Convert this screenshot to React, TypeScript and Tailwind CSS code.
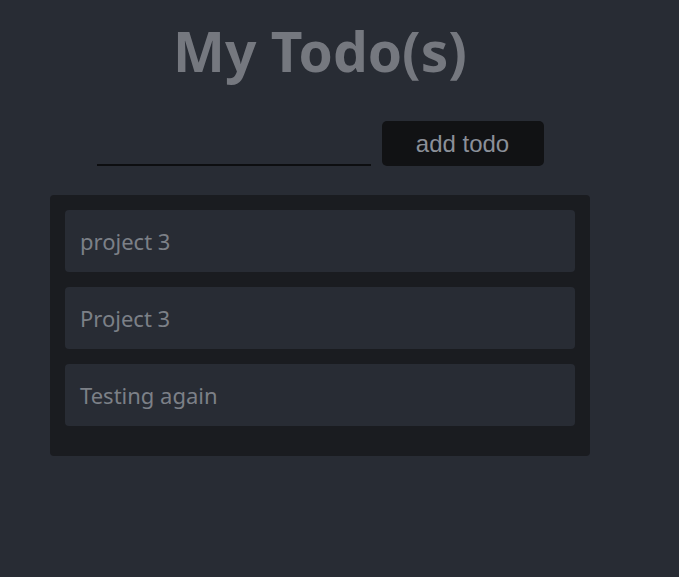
const todos = ["project 3", "Project 3", "Testing again"];

export default function App() {
  return (
    <div className="min-h-[577px] w-full bg-[#282c34] font-['Noto_Sans',sans-serif]">
      <div className="flex w-[640px] flex-col items-center pt-[17px]">
        <h1 className="text-[55px] font-bold leading-[68px] text-[#75787f]">My Todo(s)</h1>

        <div className="mt-[36px] flex items-end gap-[11px]">
          <input
            type="text"
            className="h-[30px] w-[274px] border-b-2 border-[#0d0e10] bg-transparent px-1 text-[#9aa0a8] outline-none"
          />
          <button className="h-[45px] w-[162px] rounded-[5px] bg-[#111214] font-['Liberation_Sans',sans-serif] text-[24px] text-[#8b9099]">
            add todo
          </button>
        </div>

        <div className="mt-[29px] flex w-[540px] flex-col gap-[15px] rounded-[4px] bg-[#1a1c20] px-[15px] pb-[30px] pt-[15px]">
          {todos.map((t, i) => (
            <div
              key={i}
              className="flex h-[62px] items-center rounded-[4px] bg-[#282c34] px-[15px] text-[22px] text-[#7c8087]"
            >
              {t}
            </div>
          ))}
        </div>
      </div>
    </div>
  );
}
